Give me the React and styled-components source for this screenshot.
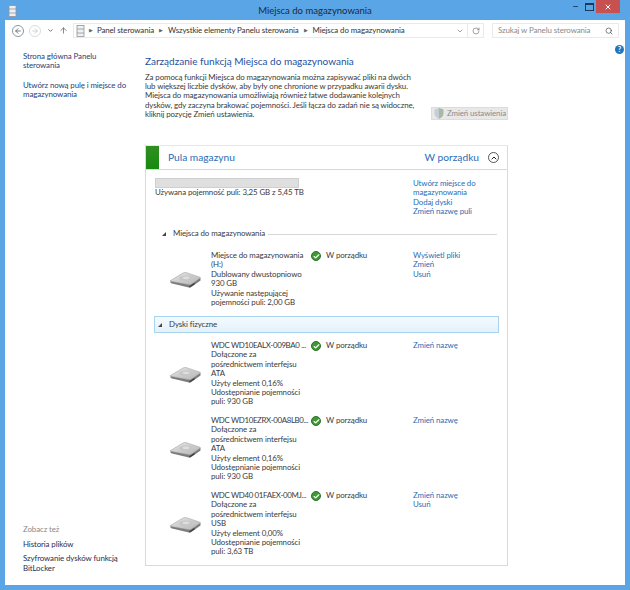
import React from 'react';
import styled, { createGlobalStyle } from 'styled-components';
import { Check, ChevronDown, ChevronUp, RotateCw, Search, ArrowLeft, ArrowRight, ArrowUp, X, Minus } from 'lucide-react';

const GlobalStyle = createGlobalStyle`
  html, body {
    margin: 0;
    padding: 0;
    background: #fff;
  }
  body {
    font-family: Lato, "Open Sans", sans-serif;
    font-size: 7.9px;
    letter-spacing: -0.1px;
    line-height: 9.4px;
    color: #3a3a3a;
  }
`;

const Window = styled.div`
  width: 630px;
  height: 590px;
  box-sizing: border-box;
  padding: 0 5px 5px;
  background: #5aa5e6;
  display: flex;
  flex-direction: column;
  overflow: hidden;
`;

const TitleBar = styled.div`
  height: 20px;
  flex: none;
  display: flex;
  align-items: center;
  position: relative;
`;

const AppIcon = styled.div`
  position: absolute;
  left: 3px;
  top: 5px;
  display: flex;
`;

const TitleText = styled.div`
  flex: 1;
  text-align: center;
  font-size: 9.5px;
  letter-spacing: 0;
  padding-top: 1px;
  color: #1b2a3a;
`;

const WindowButtons = styled.div`
  position: absolute;
  right: 5px;
  top: 0;
  display: flex;
  align-items: center;
  height: 13px;
`;

const WinButton = styled.div`
  width: ${p => p.$w}px;
  height: 13px;
  display: flex;
  align-items: center;
  justify-content: center;
  background: ${p => p.$bg || 'transparent'};
  color: ${p => p.$color || '#1a3a5c'};
`;

const RestoreGlyph = styled.div`
  width: 7px;
  height: 5px;
  border: 1px solid #1a3a5c;
  border-top-width: 2px;
`;

const Content = styled.div`
  flex: 1;
  background: #fff;
  display: flex;
  flex-direction: column;
  min-height: 0;
`;

const NavBar = styled.div`
  height: 21px;
  flex: none;
  display: flex;
  align-items: center;
  padding-left: 7px;
  box-sizing: border-box;
`;

const NavCircle = styled.div`
  width: 12px;
  height: 12px;
  box-sizing: border-box;
  border-radius: 50%;
  border: 1px solid ${p => (p.$off ? '#d8dce0' : '#8b97a3')};
  display: flex;
  align-items: center;
  justify-content: center;
  margin-right: 5px;
  color: ${p => (p.$off ? '#c4cad0' : '#5a6670')};
`;

const NavGlyph = styled.div`
  width: ${p => p.$w}px;
  display: flex;
  align-items: center;
  justify-content: center;
  color: #5a6670;
`;

const AddressBox = styled.div`
  margin-left: 1px;
  width: 411px;
  height: 15px;
  box-sizing: border-box;
  border: 1px solid #e8eaec;
  display: flex;
  align-items: center;
  padding-left: 2px;
  color: #333;
`;

const Crumb = styled.span`
  white-space: nowrap;
`;

const CrumbSep = styled.span`
  font-size: 4.5px;
  color: #666;
  margin: 0 ${p => p.$gap || 5}px;
`;

const AddressTail = styled.div`
  margin-left: auto;
  display: flex;
  align-items: center;
  height: 100%;
`;

const AddressButton = styled.div`
  width: 15px;
  height: 100%;
  display: flex;
  align-items: center;
  justify-content: center;
  border-left: ${p => (p.$line ? '1px solid #e8eaec' : 'none')};
  color: #6b7580;
`;

const SearchBox = styled.div`
  margin-left: 8px;
  width: 127px;
  height: 15px;
  box-sizing: border-box;
  border: 1px solid #e8eaec;
  display: flex;
  align-items: center;
  justify-content: space-between;
  padding: 0 5px;
  color: #8a8a8a;
  white-space: nowrap;
`;

const Body = styled.div`
  flex: 1;
  display: flex;
  min-height: 0;
  position: relative;
`;

const Sidebar = styled.nav`
  width: 140px;
  flex: none;
  box-sizing: border-box;
  padding: 11px 10px 7px 18px;
  display: flex;
  flex-direction: column;
`;

const SideLink = styled.div`
  color: #1f3f78;
  margin-bottom: 10px;
`;

const SideSpacer = styled.div`
  flex: 1;
`;

const SideHeading = styled.div`
  color: #8a8a8a;
  margin-bottom: 5px;
`;

const SideFooterLink = styled.div`
  color: #1f2f55;
  margin-bottom: 5px;
`;

const HelpBadge = styled.div`
  position: absolute;
  right: 1px;
  top: 4px;
  width: 9px;
  height: 9px;
  border-radius: 50%;
  background: #1f76c0;
  color: #fff;
  font-size: 7.5px;
  line-height: 9px;
  text-align: center;
  font-weight: 700;
`;

const Main = styled.main`
  flex: 1;
  padding-top: 14px;
  min-width: 0;
`;

const Heading = styled.h1`
  margin: 0 0 5px;
  font-size: 10px;
  letter-spacing: 0;
  line-height: 13px;
  font-weight: 400;
  color: #1e4f9c;
`;

const IntroRow = styled.div`
  display: flex;
  width: 363px;
  height: 72px;
  align-items: flex-start;
`;

const IntroText = styled.p`
  margin: 0;
  width: 286px;
  flex: none;
  white-space: nowrap;
  line-height: 9.2px;
`;

const ChangeButton = styled.div`
  margin: 34px 0 0 0;
  width: 77px;
  height: 13px;
  flex: none;
  box-sizing: border-box;
  background: #e8e8e8;
  border: 1px solid #dcdcdc;
  color: #8a8a8a;
  display: flex;
  align-items: center;
  padding-left: 2px;
  gap: 3px;
  white-space: nowrap;
`;

const Card = styled.section`
  width: 363px;
  height: 421px;
  box-sizing: border-box;
  border: 1px solid #dadada;
  border-top-color: #e8e8e8;
`;

const CardHeader = styled.header`
  height: 23px;
  display: flex;
  align-items: center;
  border-bottom: 1px solid #d8d8d8;
`;

const StatusStripe = styled.div`
  width: 13px;
  height: 100%;
  flex: none;
  background: linear-gradient(#2f8f1f, #178a10);
`;

const PoolTitle = styled.div`
  margin-left: 9px;
  font-size: 10.2px;
  letter-spacing: 0;
  color: #2a6eb5;
  flex: 1;
`;

const PoolStatus = styled.div`
  font-size: 10.2px;
  letter-spacing: 0;
  color: #2a6eb5;
  margin-right: 9px;
`;

const Collapse = styled.div`
  width: 11px;
  height: 11px;
  box-sizing: border-box;
  border: 1px solid #555;
  border-radius: 50%;
  margin-right: 8px;
  display: flex;
  align-items: center;
  justify-content: center;
  color: #222;
`;

const PoolArea = styled.div`
  display: flex;
  padding: 8px 0 0 9px;
  height: 50px;
`;

const PoolLeft = styled.div`
  width: 258px;
  flex: none;
`;

const CapacityBar = styled.div`
  width: 144px;
  height: 10px;
  background: #dfdfdf;
  border: 1px solid #cfcfcf;
  box-sizing: border-box;
`;

const Links = styled.div`
  color: #2a6eb5;
  white-space: nowrap;
  margin-top: ${p => p.$top || 0}px;
`;

const GroupHeader = styled.div`
  display: flex;
  align-items: center;
  height: ${p => (p.$active ? 17 : 12)}px;
  margin: ${p => (p.$active ? '0 8px 0 8px' : '0 10px 0 16px')};
  box-sizing: border-box;
  background: ${p => (p.$active ? 'linear-gradient(#f4fafe, #e4f2fb)' : 'transparent')};
  border: ${p => (p.$active ? '1px solid #a9d3ef' : 'none')};
  padding-left: ${p => (p.$active ? '3px' : '0')};
`;

const Triangle = styled.span`
  width: 0;
  height: 0;
  border-left: 4px solid transparent;
  border-bottom: 4px solid #444;
  margin-right: 7px;
  flex: none;
`;

const GroupTitle = styled.span`
  white-space: nowrap;
  margin-right: 3px;
`;

const GroupRule = styled.span`
  flex: 1;
  height: 1px;
  background: #d8d8d8;
`;

const DriveRow = styled.div`
  display: flex;
  align-items: flex-start;
  box-sizing: border-box;
  height: ${p => p.$h}px;
  padding: ${p => p.$pad}px 0 0 24px;
`;

const DriveIcon = styled.div`
  width: 41px;
  flex: none;
  margin-top: ${p => p.$top}px;
`;

const DriveInfo = styled.div`
  width: 100px;
  flex: none;
  white-space: nowrap;
`;

const DriveName = styled.div`
  letter-spacing: -0.35px;
`;

const DriveStatus = styled.div`
  width: 102px;
  flex: none;
  display: flex;
  align-items: center;
  gap: 5px;
`;

const StatusDot = styled.div`
  width: 10px;
  height: 10px;
  border-radius: 50%;
  background: #3f9a35;
  border: 1px solid #2f6f2a;
  box-sizing: border-box;
  color: #fff;
  display: flex;
  align-items: center;
  justify-content: center;
`;

const DiskDrawing = () => (
  <svg width="31" height="16" viewBox="0 0 31 16">
    <defs>
      <linearGradient id="diskTop" x1="0" y1="0" x2="1" y2="1">
        <stop offset="0" stopColor="#e6e6e6" />
        <stop offset="1" stopColor="#b4b4b4" />
      </linearGradient>
    </defs>
    <path d="M0.5 8.5 L0.5 10.5 Q0.5 11.2 2 11.6 L19 15.6 Q20 15.8 21 15.2 L30.5 8.5 L30.5 6 Z" fill="#7c7c7c" />
    <path d="M0.5 8.5 L13 1 Q14.5 .2 16 .5 L30 5.2 Q30.8 5.6 30 6.2 L21 12.4 Q20 13 19 12.8 L1.5 9.4 Q.4 9 .5 8.5 Z" fill="url(#diskTop)" stroke="#9a9a9a" strokeWidth="0.5" />
    <ellipse cx="16" cy="6.2" rx="7" ry="2.8" fill="#c6c6c6" />
    <ellipse cx="16" cy="5.8" rx="3.5" ry="1.4" fill="#dedede" />
    <path d="M19 14.4 L24.5 10.8 L24.5 12.4 L19.4 15.6 Z" fill="#3c3c3c" />
  </svg>
);

const ShieldIcon = () => (
  <svg width="10" height="11" viewBox="0 0 10 11">
    <path d="M5 0 L9.5 1.5 V5.5 Q9.5 8.5 5 11 Z" fill="#a9b8a5" />
    <path d="M5 0 L.5 1.5 V5.5 Q.5 8.5 5 11 Z" fill="#c5cdd6" />
  </svg>
);

const ControlPanelIcon = () => (
  <svg width="9" height="12" viewBox="0 0 9 12">
    <rect x="1" y="0.5" width="7" height="11" fill="#eef0f2" stroke="#8f969c" strokeWidth="0.8" />
    <path d="M1 4 H8 M1 8 H8" stroke="#8f969c" strokeWidth="0.8" />
  </svg>
);

const physicalDisks = [
  {
    id: 'a',
    name: 'WDC WD10EALX-009BA0 ...',
    lines: ['Dołączone za', 'pośrednictwem interfejsu', 'ATA', 'Użyty element 0,16%', 'Udostępnianie pojemności', 'puli: 930 GB'],
    links: ['Zmień nazwę'],
  },
  {
    id: 'b',
    name: 'WDC WD10EZRX-00A8LB0...',
    lines: ['Dołączone za', 'pośrednictwem interfejsu', 'ATA', 'Użyty element 0,16%', 'Udostępnianie pojemności', 'puli: 930 GB'],
    links: ['Zmień nazwę'],
  },
  {
    id: 'c',
    name: 'WDC WD40 01FAEX-00MJ...',
    lines: ['Dołączone za', 'pośrednictwem interfejsu', 'USB', 'Użyty element 0,00%', 'Udostępnianie pojemności', 'puli: 3,63 TB'],
    links: ['Zmień nazwę', 'Usuń'],
  },
];

const Status = () => (
  <DriveStatus>
    <StatusDot>
      <Check size={7} strokeWidth={4} />
    </StatusDot>
    W porządku
  </DriveStatus>
);

export default function App() {
  return (
    <>
      <GlobalStyle />
      <Window>
        <TitleBar>
          <AppIcon><ControlPanelIcon /></AppIcon>
          <TitleText>Miejsca do magazynowania</TitleText>
          <WindowButtons>
            <WinButton $w={14}><Minus size={7} strokeWidth={3} /></WinButton>
            <WinButton $w={14}><RestoreGlyph /></WinButton>
            <WinButton $w={24} $bg="#c75050" $color="#fff"><X size={8} strokeWidth={3} /></WinButton>
          </WindowButtons>
        </TitleBar>
        <Content>
          <NavBar>
            <NavCircle><ArrowLeft size={8} strokeWidth={2.5} /></NavCircle>
            <NavCircle $off><ArrowRight size={8} strokeWidth={2.5} /></NavCircle>
            <NavGlyph $w={8}><ChevronDown size={7} strokeWidth={3} /></NavGlyph>
            <NavGlyph $w={18}><ArrowUp size={9} strokeWidth={2} /></NavGlyph>
            <AddressBox>
              <ControlPanelIcon />
              <CrumbSep $gap={4}>▶</CrumbSep>
              <Crumb>Panel sterowania</Crumb>
              <CrumbSep>▶</CrumbSep>
              <Crumb>Wszystkie elementy Panelu sterowania</Crumb>
              <CrumbSep>▶</CrumbSep>
              <Crumb>Miejsca do magazynowania</Crumb>
              <AddressTail>
                <AddressButton><ChevronDown size={8} strokeWidth={2} /></AddressButton>
                <AddressButton $line><RotateCw size={8} strokeWidth={2} /></AddressButton>
              </AddressTail>
            </AddressBox>
            <SearchBox>
              Szukaj w Panelu sterowania
              <Search size={8} strokeWidth={2} color="#444" />
            </SearchBox>
          </NavBar>
          <Body>
            <Sidebar>
              <SideLink>Strona główna Panelu<br />sterowania</SideLink>
              <SideLink>Utwórz nową pulę i miejsce do<br />magazynowania</SideLink>
              <SideSpacer />
              <SideHeading>Zobacz też</SideHeading>
              <SideFooterLink>Historia plików</SideFooterLink>
              <SideFooterLink>Szyfrowanie dysków funkcją<br />BitLocker</SideFooterLink>
            </Sidebar>
            <Main>
              <Heading>Zarządzanie funkcją Miejsca do magazynowania</Heading>
              <IntroRow>
                <IntroText>
                  Za pomocą funkcji Miejsca do magazynowania można zapisywać pliki na dwóch<br />
                  lub większej liczbie dysków, aby były one chronione w przypadku awarii dysku.<br />
                  Miejsca do magazynowania umożliwiają również łatwe dodawanie kolejnych<br />
                  dysków, gdy zaczyna brakować pojemności. Jeśli łącza do zadań nie są widoczne,<br />
                  kliknij pozycję Zmień ustawienia.
                </IntroText>
                <ChangeButton>
                  <ShieldIcon />
                  Zmień ustawienia
                </ChangeButton>
              </IntroRow>
              <Card>
                <CardHeader>
                  <StatusStripe />
                  <PoolTitle>Pula magazynu</PoolTitle>
                  <PoolStatus>W porządku</PoolStatus>
                  <Collapse><ChevronUp size={8} strokeWidth={3} /></Collapse>
                </CardHeader>
                <PoolArea>
                  <PoolLeft>
                    <CapacityBar />
                    Używana pojemność puli: 3,25 GB z 5,45 TB
                  </PoolLeft>
                  <Links $top={1}>
                    Utwórz miejsce do<br />magazynowania<br />Dodaj dyski<br />Zmień nazwę puli
                  </Links>
                </PoolArea>
                <GroupHeader>
                  <Triangle />
                  <GroupTitle>Miejsca do magazynowania</GroupTitle>
                  <GroupRule />
                </GroupHeader>
                <DriveRow $h={76} $pad={11}>
                  <DriveIcon $top={21}><DiskDrawing /></DriveIcon>
                  <DriveInfo>
                    Miejsce do magazynowania<br />(H:)<br />Dublowany dwustopniowo<br />930 GB<br />Używanie następującej<br />pojemności puli: 2,00 GB
                  </DriveInfo>
                  <Status />
                  <Links>Wyświetl pliki<br />Zmień<br />Usuń</Links>
                </DriveRow>
                <GroupHeader $active>
                  <Triangle />
                  <GroupTitle>Dyski fizyczne</GroupTitle>
                </GroupHeader>
                {physicalDisks.map(disk => (
                  <DriveRow $h={75} $pad={8} key={disk.id}>
                    <DriveIcon $top={26}><DiskDrawing /></DriveIcon>
                    <DriveInfo>
                      <DriveName>{disk.name}</DriveName>
                      {disk.lines.map(line => <div key={line}>{line}</div>)}
                    </DriveInfo>
                    <Status />
                    <Links>
                      {disk.links.map(link => <div key={link}>{link}</div>)}
                    </Links>
                  </DriveRow>
                ))}
              </Card>
            </Main>
            <HelpBadge>?</HelpBadge>
          </Body>
        </Content>
      </Window>
    </>
  );
}
